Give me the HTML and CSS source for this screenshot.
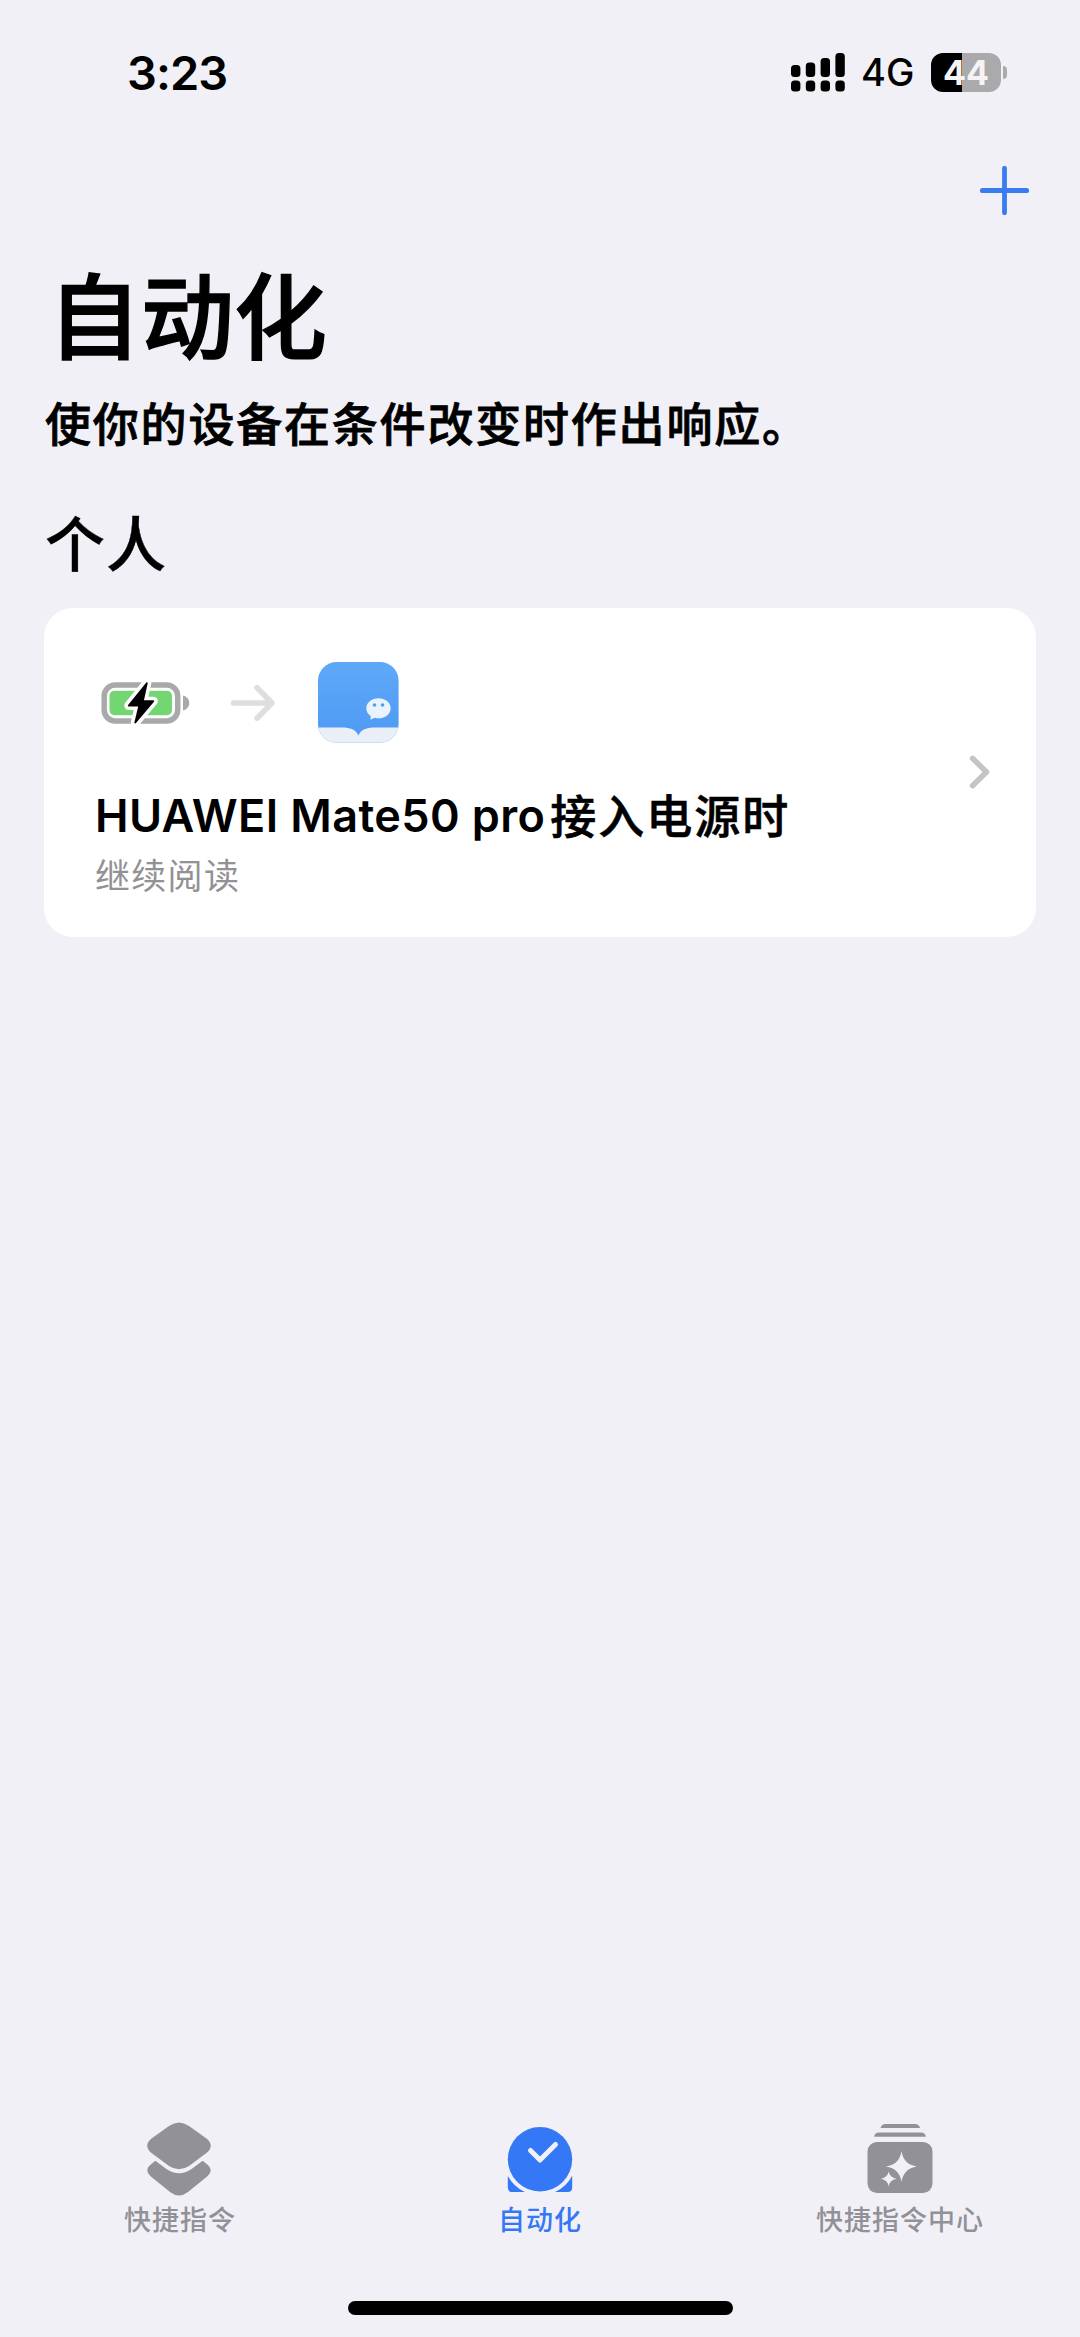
FILE: index.html
```html
<!DOCTYPE html>
<html lang="zh-CN">
<head>
<meta charset="utf-8">
<title>自动化</title>
<link rel="stylesheet" href="styles.css">
</head>
<body>
<div class="screen">
  <header class="status-bar">
    <span class="time">3:23</span>
    <div class="status-icons">
      <svg class="signal" width="54" height="39" viewBox="0 0 54 39">
        <rect x="0" y="12" width="9.4" height="12" rx="3.5"/>
        <rect x="14.8" y="9.5" width="9.4" height="14.5" rx="3.5"/>
        <rect x="29.6" y="5" width="9.4" height="19" rx="3.5"/>
        <rect x="44.4" y="0" width="9.4" height="24" rx="3.5"/>
        <rect x="0" y="27.5" width="9.4" height="11" rx="3.5"/>
        <rect x="14.8" y="27.5" width="9.4" height="11" rx="3.5"/>
        <rect x="29.6" y="27.5" width="9.4" height="11" rx="3.5"/>
        <rect x="44.4" y="27.5" width="9.4" height="11" rx="3.5"/>
      </svg>
      <span class="network">4G</span>
      <div class="battery"><span class="battery-body">44</span><span class="battery-cap"></span></div>
    </div>
  </header>

  <nav class="toolbar">
    <svg width="49" height="49" viewBox="0 0 49 49" class="plus"><path d="M24.5 2.3v44.4M2.3 24.5h44.4"/></svg>
  </nav>

  <main class="content">
    <h1 class="title">自动化</h1>
    <p class="subtitle">使你的设备在条件改变时作出响应。</p>
    <h2 class="section-title">个人</h2>
    <article class="card">
      <div class="card-main">
        <div class="flow">
          <svg class="charge" width="90" height="42" viewBox="0 0 90 42">
            <rect x="3.2" y="3" width="73.500" height="36" rx="11" fill="none" stroke="#a9a9a9" stroke-width="5.500"/>
            <path d="M82 13.500c4 1 6.200 4 6.200 7.500s-2.200 6.500-6.200 7.500z" fill="#a9a9a9"/>
            <rect x="8.500" y="8.800" width="62.500" height="24.400" rx="5" fill="#74d673"/>
            <path d="M45.800 1.200 27.800 23.600H38.300L34.300 40.500 52.300 19.200H41.800Z" fill="#fff" stroke="#fff" stroke-width="9" stroke-linejoin="round"/>
            <path d="M45.800 1.200 27.800 23.600H38.300L34.300 40.500 52.300 19.200H41.800Z" fill="#000" stroke="#000" stroke-width="1.800" stroke-linejoin="round"/>
          </svg>
          <svg class="arrow" width="44" height="36" viewBox="0 0 44 36"><path d="M2.500 18H41M26 2.800 41 18 26 33.200"/></svg>
          <svg class="reader" width="81" height="81" viewBox="0 0 81 81">
            <defs>
              <linearGradient id="cover" x1="0" y1="0" x2="0" y2="1"><stop offset="0" stop-color="#5ea9f7"/><stop offset="1" stop-color="#4d99f5"/></linearGradient>
              <clipPath id="tile"><rect width="80.600" height="80.600" rx="18.500"/></clipPath>
            </defs>
            <g clip-path="url(#tile)">
              <rect width="81" height="81" fill="url(#cover)"/>
              <path d="M0 65.500H24C32 65.500 38 67.500 40.400 73.500C42.800 67.500 48.800 65.500 56.800 65.500H81V81H0Z" fill="#eaeef6"/>
              <path d="M60.500 36.200c-6.900 0-12.200 4.500-12.200 10 0 3.200 1.700 6 4.500 7.800l-.4 3.700 4.200-2c1.200.4 2.500.6 3.900.6 6.900 0 12.200-4.500 12.200-10.100s-5.300-10-12.200-10z" fill="#eaf2fc"/>
              <circle cx="56.500" cy="43" r="1.800" fill="#519df5"/><circle cx="64.500" cy="43" r="1.800" fill="#519df5"/>
            </g>
          </svg>
        </div>
        <h3 class="card-title"><span class="device">HUAWEI Mate50 pro</span><span class="event">接入电源时</span></h3>
        <p class="card-subtitle">继续阅读</p>
      </div>
      <svg class="chevron" width="22" height="36" viewBox="0 0 22 36"><path d="M3.500 4.300 17.500 18 3.500 31.700"/></svg>
    </article>
  </main>

  <footer class="tab-bar">
    <a class="tab">
      <svg class="layers" width="66" height="75" viewBox="0 0 66 75">
        <path d="M9 39 57 39 60 41.500Q69 48 60.500 55L42 70Q33 77 24 70L5.500 55Q-3 48 6 41.500Z"/>
        <path class="halo" d="M23 4Q33-3 43 4L60.500 16.500Q69 23.500 60.500 31L43 44Q33 50.500 23 44L5.500 31Q-3 23.500 5.500 16.500Z"/>
        <path d="M23 4Q33-3 43 4L60.500 16.500Q69 23.500 60.500 31L43 44Q33 50.500 23 44L5.500 31Q-3 23.500 5.500 16.500Z"/>
      </svg>
      <span>快捷指令</span>
    </a>
    <a class="tab active">
      <svg width="66" height="75" viewBox="0 0 66 75">
        <path d="M.8 54H65.200V65.500Q65.200 70 60.500 70H5.500Q.8 70 .8 65.500Z"/>
        <circle class="halo" cx="33" cy="37.200" r="32.200"/>
        <circle cx="33" cy="37.200" r="32.200"/>
        <path class="hands" d="m23.500 28.500 9.500 9.500 15.500-15.500"/>
      </svg>
      <span>自动化</span>
    </a>
    <a class="tab">
      <svg width="66" height="75" viewBox="0 0 66 75">
        <path d="M13.500 6Q14.500 2 18.500 2H48Q52 2 53 6ZM7 14.700Q8 10.500 12 10.500H54Q58 10.500 59 14.700Z"/>
        <rect x=".5" y="20" width="65" height="51" rx="9.500"/>
        <path class="spark" d="M34.500 29Q36.500 42.500 50 44.500Q36.500 46.500 34.500 60Q32.500 46.500 19 44.500Q32.500 42.500 34.500 29ZM21.700 49.500Q22.700 55.500 29.500 56.700Q22.700 58 21.700 64.500Q20.700 58 14 56.700Q20.700 55.500 21.700 49.500Z"/>
      </svg>
      <span>快捷指令中心</span>
    </a>
  </footer>
  <div class="home-indicator"></div>
</div>
</body>
</html>
```
FILE: styles.css
```css
* { box-sizing: border-box; margin: 0; padding: 0; }
body {
  background: #f1f0f6;
  color: #000;
  font-family: Inter, "Noto Sans CJK SC", sans-serif;
}
svg { display: block; flex: none; }
.screen { width: 1080px; height: 2337px; display: flex; flex-direction: column; }

.status-bar {
  height: 144px; padding: 0 73px 0 127px;
  display: flex; align-items: center; justify-content: space-between;
}
.time { font-size: 47px; font-weight: 600; letter-spacing: -1px; }
.status-icons { display: flex; align-items: center; }
.network { font-size: 38px; font-weight: 450; margin-left: 16px; width: 76px; white-space: nowrap; }
.battery { display: flex; align-items: center; gap: 2px; margin-left: -6px; }
.battery-body {
  width: 70px; height: 39px; border-radius: 12px;
  background: linear-gradient(90deg, #000 0 31px, #aaaaac 31px);
  color: #f4f4f6; font-size: 34px; font-weight: 700; line-height: 39px; text-align: center;
}
.battery-cap { width: 4px; height: 13px; border-radius: 0 6px 6px 0; background: #aaaaac; }

.toolbar { height: 113px; padding: 22px 51px 0 0; display: flex; justify-content: flex-end; }
.plus { fill: none; stroke: #3a7bf0; stroke-width: 4.8; stroke-linecap: round; }

.content { flex: 1; padding: 0 44px; }
.title { font-size: 93px; line-height: 110px; font-weight: 500; letter-spacing: 0; padding: 6px 0 0 4px; -webkit-text-stroke: 1.4px #000; }
.subtitle { font-size: 46px; line-height: 60px; font-weight: 500; letter-spacing: 1.8px; margin-top: 21px; padding-left: 1px; white-space: nowrap; -webkit-text-stroke: .8px #000; }
.section-title { font-size: 60px; line-height: 80px; font-weight: 500; letter-spacing: 1px; margin-top: 51px; padding-left: 1px; -webkit-text-stroke: .4px #000; }

.card {
  margin: 23px 0 0; width: 992px; height: 329px; padding: 54px 45px 0 51px;
  border-radius: 29px; background: #fff;
  display: flex; justify-content: space-between;
}
.flow { display: flex; align-items: center; padding-left: 6px; }
.arrow { margin-left: 40px; fill: none; stroke: #dedede; stroke-width: 5.5; stroke-linecap: round; stroke-linejoin: round; }
.reader { margin-left: 43px; }
.card-title { margin-top: 43px; height: 60px; line-height: 60px; font-size: 46px; font-weight: 500; display: flex; gap: 5px; white-space: nowrap; }
.device { font-size: 45px; font-weight: 600; letter-spacing: .4px; }
.event { letter-spacing: 2px; -webkit-text-stroke: .6px #000; }
.card-subtitle { margin-top: 6px; font-size: 35px; line-height: 48px; font-weight: 400; color: #929294; letter-spacing: 1.3px; }
.chevron { margin-top: 92px; fill: none; stroke: #c4c4c6; stroke-width: 5.5; stroke-linecap: round; stroke-linejoin: round; }

.tab-bar { height: 178px; display: grid; grid-template-columns: repeat(3, 1fr); }
.tab { display: flex; flex-direction: column; align-items: center; color: #919197; font-size: 27px; line-height: 36px; font-weight: 500; letter-spacing: 1px; }
.tab svg { fill: currentColor; margin-bottom: 6px; }
.tab .layers { margin-right: 2px; }
.tab.active { color: #3578f6; }
.tab .halo { fill: #f1f0f6; stroke: #f1f0f6; stroke-width: 8; }
.hands { fill: none; stroke: #f1f0f6; stroke-width: 5; stroke-linecap: round; stroke-linejoin: round; }
.spark { fill: #f1f0f6; }
.home-indicator { width: 385px; height: 14px; margin: 1px auto 22px; border-radius: 7px; background: #000; flex: none; }
```
